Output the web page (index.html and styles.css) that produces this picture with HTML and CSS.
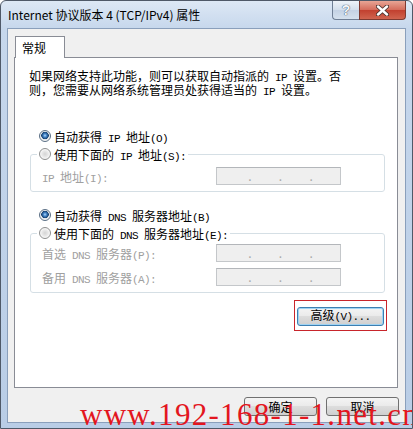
FILE: index.html
```html
<!DOCTYPE html>
<html lang="zh-CN">
<head>
    <meta charset="UTF-8">
    <title>Internet 协议版本 4 (TCP/IPv4) 属性</title>
    <link rel="stylesheet" href="styles.css">
</head>
<body>
    <div class="window">
        <div class="titlebar">
            <span class="title">Internet 协议版本 4 (TCP/IPv4) 属性</span>
            <div class="caption-buttons">
                <span class="cap help">?</span>
                <span class="cap close">
                    <svg width="13" height="11" viewBox="0 0 13 11">
                        <path d="M2 1.5 L11 9.5 M11 1.5 L2 9.5" stroke="#4a3430" stroke-width="4.2" stroke-linecap="round"/>
                        <path d="M2 1.5 L11 9.5 M11 1.5 L2 9.5" stroke="#ffffff" stroke-width="2.4" stroke-linecap="round"/>
                    </svg>
                </span>
            </div>
        </div>

        <div class="client">
            <div class="tabs">
                <span class="tab">常规</span>
            </div>
            <div class="panel">
                <p class="desc">如果网络支持此功能，则可以获取自动指派的<span class="en"> IP </span>设置。否<br>则，您需要从网络系统管理员处获得适当的<span class="en"> IP </span>设置。</p>

                <label class="radio-row first">
                    <span class="radio checked"></span>
                    <span class="radio-text">自动获得<span class="en"> IP </span>地址<span class="en">(O)</span></span>
                </label>
                <fieldset class="group">
                    <legend>
                        <label class="radio-row">
                            <span class="radio"></span>
                            <span class="radio-text">使用下面的<span class="en"> IP </span>地址<span class="en">(S):</span></span>
                        </label>
                    </legend>
                    <div class="field-row">
                        <span class="field-label"><span class="en">IP </span>地址<span class="en">(I):</span></span>
                        <span class="ipbox"><span>.</span><span>.</span><span>.</span></span>
                    </div>
                </fieldset>

                <label class="radio-row second">
                    <span class="radio checked"></span>
                    <span class="radio-text">自动获得<span class="en"> DNS </span>服务器地址<span class="en">(B)</span></span>
                </label>
                <fieldset class="group dns">
                    <legend>
                        <label class="radio-row">
                            <span class="radio"></span>
                            <span class="radio-text">使用下面的<span class="en"> DNS </span>服务器地址<span class="en">(E):</span></span>
                        </label>
                    </legend>
                    <div class="field-row">
                        <span class="field-label">首选<span class="en"> DNS </span>服务器<span class="en">(P):</span></span>
                        <span class="ipbox"><span>.</span><span>.</span><span>.</span></span>
                    </div>
                    <div class="field-row">
                        <span class="field-label">备用<span class="en"> DNS </span>服务器<span class="en">(A):</span></span>
                        <span class="ipbox"><span>.</span><span>.</span><span>.</span></span>
                    </div>
                </fieldset>

                <div class="adv-wrap">
                    <button class="btn default">高级<span class="en">(V)...</span></button>
                </div>
            </div>
            <div class="footer">
                <button class="btn">确定</button>
                <button class="btn">取消</button>
            </div>
        </div>

        <div class="watermark">www.192-168-1-1.net.cn</div>
    </div>
</body>
</html>
```

FILE: styles.css
```css
body {
    margin: 0;
    background: #ffffff;
    font-family: "Noto Sans CJK SC", sans-serif;
    font-size: 12px;
    color: #000;
}
.window {
    position: relative;
    width: 413px;
    height: 429px;
    box-sizing: border-box;
    border: 1px solid #4f5968;
    border-radius: 6px 6px 0 0;
    padding: 0 6px 5px 6px;
    background: linear-gradient(#dde8f5, #c6d7ec 28px, #b9cde6);
    overflow: hidden;
}
.titlebar {
    display: flex;
    height: 27px;
    align-items: center;
}
.title {
    margin-left: 1px;
    line-height: 12px;
}
.caption-buttons {
    display: flex;
    margin-left: auto;
    align-self: flex-start;
}
.cap {
    display: flex;
    align-items: center;
    justify-content: center;
    height: 19px;
    box-sizing: border-box;
    border: 1px solid #6f7f95;
    border-top: none;
}
.help {
    width: 27px;
    border-radius: 0 0 0 4px;
    border-right: none;
    background: linear-gradient(#eef3f9, #d3deeb 50%, #c4d2e4 51%, #d5e1ee);
    color: #f4f7fb;
    font-family: "Liberation Sans", sans-serif;
    font-weight: bold;
    font-size: 14px;
    text-shadow: 0 0 1px #3d4d63, 0 0 1px #3d4d63;
}
.close {
    width: 47px;
    border-color: #7e3a31;
    border-radius: 0 0 4px 0;
    background: linear-gradient(#e8a595, #d46b5a 50%, #c2402f 51%, #d0644f);
}
.client {
    height: 395px;
    box-sizing: border-box;
    border: 1px solid #8a9fbb;
    background: #f0f0f0;
    padding: 7px 7px 0 6px;
}
.tabs {
    display: flex;
}
.tab {
    height: 22px;
    box-sizing: border-box;
    margin-left: 1px;
    margin-bottom: -1px;
    padding: 0 18px 0 6px;
    border: 1px solid #898c95;
    border-bottom: none;
    background: #fff;
    display: flex;
    align-items: center;
    position: relative;
    z-index: 1;
}
.panel {
    height: 331px;
    box-sizing: border-box;
    border: 1px solid #898c95;
    background: #fff;
    padding: 12px 12px 0 15px;
    display: flex;
    flex-direction: column;
}
.desc {
    margin: 0 0 0 -1px;
    line-height: 12px;
}
.en {
    font-family: "Liberation Mono", monospace;
    font-size: 11px;
    letter-spacing: -0.6px;
}
.radio-row {
    display: flex;
    align-items: center;
    height: 18px;
    gap: 3px;
    white-space: nowrap;
}
.radio-row.first {
    margin: 29px 0 0 9px;
}
.radio-row.second {
    margin: 14px 0 0 9px;
}
.radio {
    width: 12px;
    height: 12px;
    box-sizing: border-box;
    border-radius: 50%;
    border: 1px solid #8e8f8f;
    background: radial-gradient(circle, #d4d4d4 0, #e8e8e8 3px, #fafafa 5px);
}
.radio.checked {
    border-color: #5a6f85;
    background: radial-gradient(circle at 50% 45%, #b6dcf8 0, #4a8bd0 1.5px, #143f6e 3.5px, #dfe3e8 4px, #f6f6f6 5px);
}
.group {
    margin: 0;
    padding: 4px 0 6px 11px;
    border: 1px solid #d5dfe5;
    border-radius: 3px;
}
.group.dns {
    padding-top: 2px;
}
.group legend {
    margin-left: -5px;
    padding: 0 2px;
}
.field-row {
    display: grid;
    grid-template-columns: 174px 125px;
    align-items: center;
    height: 18px;
    color: #a0a0a0;
    white-space: nowrap;
}
.field-row + .field-row {
    margin-top: 6px;
}
.ipbox {
    height: 18px;
    box-sizing: border-box;
    border: 1px solid #c4c7ca;
    border-top-color: #b3b6ba;
    background: #efefef;
    display: flex;
    justify-content: space-evenly;
    align-items: flex-end;
    padding: 0 0 2px 4px;
    line-height: 12px;
    color: #a8a8a8;
}
.adv-wrap {
    align-self: flex-end;
    margin: 7px -2px 0 0;
    padding: 5px 2px 4px 2px;
    border: 1px solid #c8252b;
}
.btn {
    height: 19px;
    box-sizing: border-box;
    border: 1px solid #707070;
    border-radius: 3px;
    background: linear-gradient(#f4f4f4, #ebebeb 45%, #dddddd 50%, #cfcfcf);
    font-family: "Noto Sans CJK SC", sans-serif;
    font-size: 12px;
    line-height: 12px;
    padding: 0;
    color: #000;
}
.btn.default {
    width: 87px;
    border-color: #3c7fb1;
    box-shadow: inset 0 0 0 1px #9fd3f3;
}
.footer {
    display: flex;
    justify-content: flex-end;
    gap: 9px;
    margin: 9px -1px 0 0;
}
.footer .btn {
    width: 73px;
}
.watermark {
    position: absolute;
    left: 79px;
    top: 398px;
    font-family: "Liberation Serif", serif;
    font-size: 31px;
    line-height: 31px;
    letter-spacing: 1.3px;
    color: #e3161e;
    white-space: nowrap;
}
```
